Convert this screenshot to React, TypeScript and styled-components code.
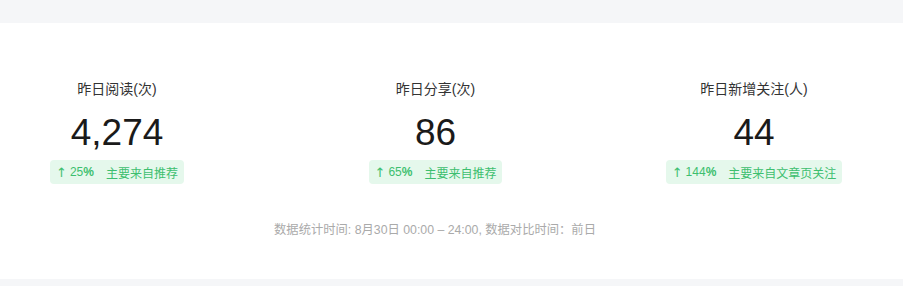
import React from "react";
import styled, { createGlobalStyle } from "styled-components";

interface StatItem {
  title: string;
  value: string;
  rate: string;
  source: string;
}

const stats: StatItem[] = [
  { title: "昨日阅读(次)", value: "4,274", rate: "25", source: "主要来自推荐" },
  { title: "昨日分享(次)", value: "86", rate: "65", source: "主要来自推荐" },
  { title: "昨日新增关注(人)", value: "44", rate: "144", source: "主要来自文章页关注" },
];

const GlobalStyle = createGlobalStyle`
  html, body {
    margin: 0;
    padding: 0;
    background: #f5f6f8;
    font-family: "Liberation Sans", "Noto Sans CJK SC", sans-serif;
  }
`;

const App: React.FC = () => {
  return (
    <Page>
      <GlobalStyle />
      <Card>
        <StatGrid>
          {stats.map((item) => (
            <StatColumn key={item.title}>
              <StatTitle>{item.title}</StatTitle>
              <StatValue>{item.value}</StatValue>
              <Badge>
                <span className="badge-rate">
                  <i>↑</i>
                  {item.rate}
                  <b>%</b>
                </span>
                <span>{item.source}</span>
              </Badge>
            </StatColumn>
          ))}
        </StatGrid>
        <Footnote>数据统计时间: 8月30日 00:00 – 24:00, 数据对比时间：前日</Footnote>
      </Card>
    </Page>
  );
};

export default App;

const Page = styled.div`
  padding-top: 23px;
  padding-bottom: 7px;
`;

const Card = styled.div`
  background: #fff;
  height: 256px;
  box-sizing: border-box;
  padding-top: 56px;
`;

const StatGrid = styled.div`
  display: grid;
  grid-template-columns: repeat(3, 234px);
  column-gap: 84.5px;
`;

const StatColumn = styled.div`
  display: flex;
  flex-direction: column;
  align-items: center;
`;

const StatTitle = styled.div`
  font-size: 14px;
  line-height: 20px;
  color: #333;
`;

const StatValue = styled.div`
  margin-top: 12px;
  font-size: 37px;
  line-height: 44px;
  color: #1a1a1a;
`;

const Badge = styled.div`
  margin-top: 5px;
  height: 24px;
  display: flex;
  align-items: center;
  gap: 12px;
  padding: 0 6px;
  border-radius: 4px;
  background: #e5f8ec;
  color: #3dbf6f;
  font-size: 12px;
  .badge-rate {
    display: flex;
    align-items: center;
  }
  .badge-rate i {
    font-style: normal;
    font-family: "DejaVu Sans", sans-serif;
    font-size: 13px;
    margin-right: 3px;
  }
  .badge-rate b {
    font-weight: 700;
  }
`;

const Footnote = styled.div`
  width: 870px;
  margin-top: 37px;
  text-align: center;
  font-size: 12.3px;
  line-height: 18px;
  color: #aaa;
`;
